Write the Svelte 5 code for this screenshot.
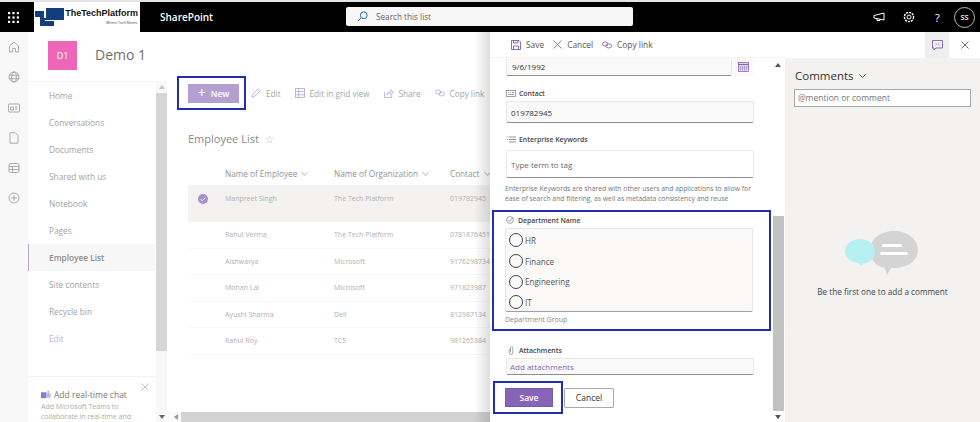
<script>
    const navItems = ['Home', 'Conversations', 'Documents', 'Shared with us', 'Notebook', 'Pages', 'Employee List', 'Site contents', 'Recycle bin', 'Edit'];

    const employees = [
        { name: 'Manpreet Singh', org: 'The Tech Platform', contact: '019782945', selected: true },
        { name: 'Rahul Verma', org: 'The Tech Platform', contact: '0781876451' },
        { name: 'Aishwarya', org: 'Microsoft', contact: '9176298734' },
        { name: 'Mohan Lal', org: 'Microsoft', contact: '971823987' },
        { name: 'Ayushi Sharma', org: 'Dell', contact: '812987134' },
        { name: 'Rahul Roy', org: 'TCS', contact: '981265384' }
    ];

    const departments = ['HR', 'Finance', 'Engineering', 'IT'];
</script>

<div class="screen">
    <!-- top suite bar -->
    <header class="suiteBar">
        <div class="waffle">
            <svg width="11" height="11" viewBox="0 0 11 11" fill="#fff">
                <rect x="0" y="0" width="2.2" height="2.2" /><rect x="4.4" y="0" width="2.2" height="2.2" /><rect x="8.8" y="0" width="2.2" height="2.2" />
                <rect x="0" y="4.4" width="2.2" height="2.2" /><rect x="4.4" y="4.4" width="2.2" height="2.2" /><rect x="8.8" y="4.4" width="2.2" height="2.2" />
                <rect x="0" y="8.8" width="2.2" height="2.2" /><rect x="4.4" y="8.8" width="2.2" height="2.2" /><rect x="8.8" y="8.8" width="2.2" height="2.2" />
            </svg>
        </div>
        <div class="logo">
            <svg width="29" height="18" viewBox="0 0 29 18">
                <rect x="0" y="3" width="9" height="6" fill="#123f7c" />
                <rect x="5" y="9" width="4" height="9" fill="#123f7c" />
                <rect x="9" y="10" width="10" height="8" fill="#123f7c" />
                <rect x="11" y="0" width="18" height="12" fill="#123f7c" />
                <path d="M10 12.5h9" stroke="#fff" stroke-width="1" />
            </svg>
            <div class="logoText">
                <span class="logoName">TheTechPlatform</span>
                <span class="logoTag">Where Tech Meets.</span>
            </div>
        </div>
        <div class="appName">SharePoint</div>
        <div class="search">
            <svg width="11" height="11" viewBox="0 0 11 11" fill="none" stroke="#2b6cb0" stroke-width="1">
                <circle cx="6.8" cy="4.2" r="3.4" /><path d="M4.4 6.6 0.8 10.2" />
            </svg>
            <span>Search this list</span>
        </div>
        <div class="suiteIcons">
            <svg width="12" height="10" viewBox="0 0 12 10" fill="none" stroke="#fff" stroke-width="1">
                <path d="M11 1 1 3.5v2.5l10 2z" /><path d="M4 6.5v2h3v-1.4" />
            </svg>
            <svg class="gear" width="12" height="12" viewBox="0 0 12 12" fill="none" stroke="#fff" stroke-width="1">
                <circle cx="6" cy="6" r="2" /><circle cx="6" cy="6" r="4.6" stroke-dasharray="2.2 0.8" stroke-width="1.4" />
            </svg>
            <span class="helpIcon">?</span>
            <span class="avatar">SS</span>
        </div>
    </header>

    <div class="workspace">
        <div class="page">
            <!-- left icon rail -->
            <aside class="rail">
                <svg width="12" height="12" viewBox="0 0 12 12"><path d="M1.5 11V5L6 1l4.500 4v6H7.500V7.500h-3V11z" /></svg>
                <svg width="12" height="12" viewBox="0 0 12 12"><circle cx="6" cy="6" r="5" /><ellipse cx="6" cy="6" rx="2.300" ry="5" /><path d="M1 4.300h10M1 7.700h10" /></svg>
                <svg width="12" height="12" viewBox="0 0 12 12"><rect x="0.500" y="2" width="11" height="8" rx="1" /><path d="M2.500 5h3v3h-3zM7 5h2.500M7 7h2.500" /></svg>
                <svg width="12" height="12" viewBox="0 0 12 12"><path d="M2 .8h5.300L10 3.500v7.700H2z" /></svg>
                <svg width="12" height="12" viewBox="0 0 12 12"><rect x="1" y="1.500" width="10" height="9" rx="1.500" /><path d="M1 4.500h10M1 7.500h10M4.500 4.500v6" /></svg>
                <svg width="12" height="12" viewBox="0 0 12 12"><circle cx="6" cy="6" r="5" /><path d="M6 3.200v5.600M3.200 6h5.600" /></svg>
            </aside>

            <div class="site">
                <div class="siteHeader">
                    <div class="siteLogo">D1</div>
                    <div class="siteName">Demo 1</div>
                </div>

                <div class="siteBody">
                    <nav class="nav">
                        <ul>
                            {#each navItems as item}
                                <li class:active={item === 'Employee List'} class:editLink={item === 'Edit'}>{item}</li>
                            {/each}
                        </ul>
                        <div class="promo">
                            <button class="promoClose" aria-label="Dismiss">
                                <svg width="8" height="8" viewBox="0 0 8 8" fill="none" stroke="#b9a6d6" stroke-width=".8"><path d="M.5.5l7 7M7.500.5l-7 7" /></svg>
                            </button>
                            <div class="promoTitle">
                                <svg width="10" height="10" viewBox="0 0 11 10"><rect x="0" y="2" width="6" height="6.500" fill="#7b83c4" /><rect x="6" y="3" width="4.500" height="5" rx="1" fill="#b5b9e0" /><circle cx="8" cy="1.500" r="1.300" fill="#b5b9e0" /></svg>
                                Add real-time chat
                            </div>
                            <p>Add Microsoft Teams to collaborate in real-time and</p>
                        </div>
                    </nav>

                    <div class="navScroll">
                        <svg width="6" height="4" viewBox="0 0 6 4" fill="#c4c4c4"><path d="M0 4 3 0l3 4z" /></svg>
                        <div class="navThumb"></div>
                        <svg class="navDown" width="6" height="4" viewBox="0 0 6 4" fill="#666"><path d="M0 0l3 4 3-4z" /></svg>
                    </div>

                    <main class="content">
                        <div class="commandBar">
                            <div class="hiliteNew">
                                <div class="newBtn"><span class="plus">+</span> New</div>
                            </div>
                            <span class="cmd">
                                <svg width="10" height="10" viewBox="0 0 11 11" fill="none" stroke="#b9a6d6" stroke-width=".9"><path d="M1 10l.8-3L8 .8 10.200 3 4 9.200z" /></svg>
                                Edit
                            </span>
                            <span class="cmd">
                                <svg width="10" height="10" viewBox="0 0 11 11" fill="none" stroke="#b9a6d6" stroke-width=".9"><rect x=".5" y=".5" width="10" height="10" /><path d="M.5 4h10M.5 7.500h10M4 .5v10" /></svg>
                                Edit in grid view
                            </span>
                            <span class="cmd">
                                <svg width="10" height="9" viewBox="0 0 11 10" fill="none" stroke="#b9a6d6" stroke-width=".9"><path d="M.5 3.500v6h8V7M3 6.500C3.500 4 5.500 3 7.500 3V1l3 2.800-3 2.700v-2C5.500 4.500 4 5 3 6.500z" /></svg>
                                Share
                            </span>
                            <span class="cmd">
                                <svg width="10" height="8" viewBox="0 0 11 8" fill="none" stroke="#b9a6d6" stroke-width=".9"><ellipse cx="3.500" cy="3" rx="3" ry="2.300" /><ellipse cx="7.500" cy="5" rx="3" ry="2.300" /></svg>
                                Copy link
                            </span>
                        </div>

                        <h2 class="listTitle">Employee List <span class="star">☆</span></h2>

                        <div class="listRow listHead">
                            <span></span>
                            <span>Name of Employee <i class="chev"></i></span>
                            <span>Name of Organization <i class="chev"></i></span>
                            <span>Contact <i class="chev"></i></span>
                        </div>

                        {#each employees as e}
                            <div class="listRow" class:selected={e.selected}>
                                <span class="checkCell">
                                    {#if e.selected}
                                        <svg width="10" height="10" viewBox="0 0 10 10"><circle cx="5" cy="5" r="5" fill="#a78fce" /><path d="M2.700 5.200 4.300 6.800 7.400 3.500" fill="none" stroke="#fff" stroke-width="1" /></svg>
                                    {/if}
                                </span>
                                <span>{e.name}</span>
                                <span>{e.org}</span>
                                <span>{e.contact}</span>
                            </div>
                        {/each}

                        <div class="hScroll">
                            <svg width="4" height="6" viewBox="0 0 4 6" fill="#999"><path d="M4 0 0 3l4 3z" /></svg>
                            <div class="hThumb"></div>
                        </div>
                    </main>
                </div>
            </div>
            <div class="panelShadow"></div>
        </div>

        <!-- edit form panel -->
        <section class="panel">
            <div class="panelBar">
                <span class="pCmd">
                    <svg width="10" height="10" viewBox="0 0 10 10" fill="none" stroke="#7a5fb0" stroke-width=".9"><path d="M.5.5h7.500l1.500 1.500v7.500H.5z" /><path d="M2.500.5v2.500h4.500V.5M2.500 9.500V6h5v3.500" /></svg>
                    Save
                </span>
                <span class="pCmd">
                    <svg width="9" height="9" viewBox="0 0 9 9" fill="none" stroke="#7a5fb0" stroke-width=".8"><path d="M.5.5l8 8M8.500.5l-8 8" /></svg>
                    Cancel
                </span>
                <span class="pCmd">
                    <svg width="10" height="8" viewBox="0 0 11 8" fill="none" stroke="#7a5fb0" stroke-width=".9"><ellipse cx="3.500" cy="3" rx="3" ry="2.300" /><ellipse cx="7.500" cy="5" rx="3" ry="2.300" /></svg>
                    Copy link
                </span>
            </div>
            <div class="panelBody">
                <div class="form">
                    <div class="dateRow">
                        <div class="input dateInput">9/6/1992</div>
                        <div class="calBtn">
                            <svg width="11" height="10" viewBox="0 0 11 10" fill="none" stroke="#8764b8" stroke-width=".8"><rect x=".5" y=".5" width="10" height="9" /><path d="M.5 2.500h10" stroke-width="1.500" /><path d="M2.500 4v5M4.500 4v5M6.500 4v5M8.500 4v5M.5 5h10M.5 7h10" stroke-width=".5" /></svg>
                        </div>
                    </div>

                    <div class="fieldLabel contactLabel">
                        <svg width="10" height="7" viewBox="0 0 10 7" fill="none" stroke="#777" stroke-width=".7"><rect x=".4" y=".4" width="9" height="6" /><path d="M2 2.500h1M4 2.500h1M6 2.500h2M2 4.500h6" /></svg>
                        Contact
                    </div>
                    <div class="input contactInput">019782945</div>

                    <div class="fieldLabel keywordsLabel">
                        <svg width="10" height="7" viewBox="0 0 10 7" fill="none" stroke="#777" stroke-width=".8"><path d="M3 1h7M3 3.500h7M3 6h7M.5 1h1M1 3.500h1" /></svg>
                        Enterprise Keywords
                    </div>
                    <div class="input keywordsInput">Type term to tag</div>
                    <p class="helpText">Enterprise Keywords are shared with other users and applications to allow for ease of search and filtering, as well as metadata consistency and reuse</p>

                    <div class="hiliteDept">
                        <div class="fieldLabel deptLabel">
                            <svg width="8" height="8" viewBox="0 0 8 8" fill="none" stroke="#777" stroke-width=".7"><circle cx="4" cy="4" r="3.400" /><path d="M2.300 4 3.600 5.300 6.800 1.500" /></svg>
                            Department Name
                        </div>
                        <div class="choices">
                            {#each departments as d}
                                <div class="choice"><span class="radio"></span>{d}</div>
                            {/each}
                        </div>
                        <div class="deptHint">Department Group</div>
                    </div>

                    <div class="fieldLabel attachLabel">
                        <svg width="10" height="9" viewBox="0 0 6 10" fill="none" stroke="#888" stroke-width=".8"><path d="M1 3v4.500a2 2 0 0 0 4 0V2a1.300 1.300 0 0 0-2.600 0v5" /></svg>
                        Attachments
                    </div>
                    <div class="input attachInput">Add attachments</div>

                    <div class="formButtons">
                        <div class="hiliteSave">
                            <button class="saveBtn">Save</button>
                        </div>
                        <button class="cancelBtn">Cancel</button>
                    </div>
                </div>
                <div class="formScroll">
                    <svg width="6" height="4" viewBox="0 0 6 4" fill="#555"><path d="M0 4 3 0l3 4z" /></svg>
                    <div class="formThumb"></div>
                    <svg width="6" height="4" viewBox="0 0 6 4" fill="#555"><path d="M0 0l3 4 3-4z" /></svg>
                </div>
            </div>
        </section>

        <!-- comments pane -->
        <aside class="comments">
            <div class="commentsBar">
                <div class="commentToggle">
                    <svg width="11" height="11" viewBox="0 0 11 11" fill="none" stroke="#7a5fb0" stroke-width=".9"><path d="M.5.5h10v7.500H4l-2 2V8H.5z" /><path d="M3.800 4.200h.8M6.400 4.200h.8" stroke-width="1.200" /></svg>
                </div>
                <svg width="8" height="8" viewBox="0 0 8 8" fill="none" stroke="#444" stroke-width=".8"><path d="M.5.5l7 7M7.500.5l-7 7" /></svg>
            </div>
            <div class="commentsBody">
                <div class="commentsTitle">
                    Comments
                    <svg width="7" height="4" viewBox="0 0 7 4" fill="none" stroke="#333" stroke-width=".8"><path d="M.3.300 3.500 3.500 6.700.3" /></svg>
                </div>
                <div class="commentInput">@mention or comment</div>
                <div class="emptyState">
                    <svg width="76" height="46" viewBox="0 0 76 46">
                        <path d="M50 1c13 0 24 8 24 19s-11 18-24 18c-1 0-2 0-3 0l-4 7-2-7C31 36 26 29 26 20 26 9 37 1 50 1z" fill="#d4d4d4" />
                        <rect x="38" y="14" width="20" height="3" rx="1.500" fill="#fff" />
                        <rect x="36" y="22" width="28" height="3" rx="1.500" fill="#fff" />
                        <path d="M16 9c8.500 0 15 5 15 12.500S24.500 33 21 33l-1.500 0-2 3-3-3C7 33 1 28 1 21.500 1 14 7.500 9 16 9z" fill="#b6f0f1" />
                    </svg>
                    <p>Be the first one to add a comment</p>
                </div>
            </div>
        </aside>
    </div>
</div>

<style>
    :global(body) {
        margin: 0;
        font-family: "Open Sans", "Noto Sans", sans-serif;
    }

    .screen {
        width: 980px;
        height: 422px;
        overflow: hidden;
        display: flex;
        flex-direction: column;
        background: #e4e4e4;
    }

    button {
        font-family: inherit;
        cursor: pointer;
    }

    /* suite bar */
    .suiteBar {
        flex: 0 0 30px;
        margin-top: 2px;
        background: #000;
        display: flex;
        align-items: center;
        color: #fff;
    }
    .suiteBar > * {
        flex: none;
    }
    .waffle {
        width: 34px;
        padding-left: 8px;
        box-sizing: border-box;
        display: flex;
    }
    .logo {
        width: 106px;
        height: 30px;
        background: #fff;
        display: flex;
        align-items: flex-start;
        padding: 6px 0 0 1px;
        box-sizing: border-box;
        gap: 3px;
    }
    .logoText {
        width: 71px;
        display: flex;
        flex-direction: column;
        align-items: flex-end;
        color: #111;
        line-height: 1;
    }
    .logoName {
        font-family: "Liberation Sans", sans-serif;
        font-weight: 700;
        font-size: 9px;
        margin-top: 1px;
        white-space: nowrap;
    }
    .logoTag {
        font-size: 3.6px;
        margin-top: 3px;
        color: #444;
        white-space: nowrap;
    }
    .appName {
        width: 206px;
        padding-left: 20px;
        box-sizing: border-box;
        font-size: 10px;
        font-weight: 600;
    }
    .search {
        width: 287px;
        height: 19px;
        margin-top: -1px;
        background: #f7f7f7;
        border-radius: 2px;
        display: flex;
        align-items: center;
        gap: 8px;
        padding-left: 11px;
        box-sizing: border-box;
        color: #666;
        font-size: 8.2px;
    }
    .suiteIcons {
        margin-left: auto;
        padding-right: 5px;
        display: flex;
        align-items: center;
    }
    .gear {
        margin-left: 18px;
    }
    .helpIcon {
        margin-left: 20px;
        font-size: 11px;
        width: 8px;
    }
    .avatar {
        margin-left: 11px;
        width: 19px;
        height: 19px;
        border: 1px solid #bbb;
        border-radius: 50%;
        display: flex;
        align-items: center;
        justify-content: center;
        font-size: 7.5px;
        font-weight: 600;
    }

    .workspace {
        flex: 1;
        min-height: 0;
        display: flex;
    }

    /* dimmed SharePoint page */
    .page {
        width: 490px;
        position: relative;
        display: flex;
        overflow: hidden;
        background: #fff;
    }
    .panelShadow {
        position: absolute;
        top: 0;
        right: 0;
        bottom: 0;
        width: 16px;
        background: linear-gradient(to right, rgba(0, 0, 0, 0), rgba(0, 0, 0, 0.13));
    }

    .rail {
        width: 28px;
        flex: none;
        background: #f8f8f8;
        display: flex;
        flex-direction: column;
        align-items: center;
        gap: 18.3px;
        padding: 9px 0 0 0;
        box-sizing: border-box;
    }
    .rail svg {
        fill: none;
        stroke: #a3a3a3;
        stroke-width: 0.9;
        margin-left: -1px;
    }

    .site {
        flex: 1;
        min-width: 0;
        display: flex;
        flex-direction: column;
    }
    .siteHeader {
        flex: 0 0 44px;
        display: flex;
        align-items: flex-start;
    }
    .siteLogo {
        width: 29px;
        height: 29px;
        margin: 9px 0 0 20px;
        background: #ee66b8;
        color: #fff;
        font-size: 9px;
        display: flex;
        align-items: center;
        justify-content: center;
    }
    .siteName {
        margin: 13px 0 0 18px;
        font-size: 14px;
        line-height: 20px;
        color: #6f6f6f;
    }

    .siteBody {
        flex: 1;
        min-height: 0;
        display: flex;
    }

    .nav {
        width: 128px;
        flex: none;
        margin-top: 5px;
        border-top: 1px solid #f5f5f5;
        display: flex;
        flex-direction: column;
    }
    .nav ul {
        list-style: none;
        margin: 0;
        padding: 0;
    }
    .nav li {
        height: 27px;
        line-height: 27px;
        padding-left: 21px;
        font-size: 8.3px;
        color: #a2a2a2;
    }
    .nav li.active {
        background: #f7f7f7;
        border-left: 1px solid #b9a6d6;
        padding-left: 20px;
        font-weight: 600;
        color: #8a8a8a;
        margin-right: 1px;
    }
    .nav li.editLink {
        color: #c2b3dc;
    }
    .promo {
        margin-top: auto;
        position: relative;
        height: 46px;
        border-top: 1px solid #f3f3f3;
        padding: 12px 8px 0 13px;
        box-sizing: border-box;
    }
    .promoClose {
        position: absolute;
        top: 6px;
        right: 7px;
        padding: 0;
        border: 0;
        background: none;
        display: flex;
    }
    .promoTitle {
        display: flex;
        align-items: center;
        gap: 3px;
        font-size: 8.5px;
        font-weight: 500;
        line-height: 12px;
        color: #777;
    }
    .promo p {
        margin: 1px 0 0;
        font-size: 7px;
        line-height: 10px;
        color: #ababab;
    }

    .navScroll {
        width: 11px;
        flex: none;
        margin-top: 5px;
        background: #f8f8f8;
        display: flex;
        flex-direction: column;
        align-items: center;
        padding-top: 4px;
        box-sizing: border-box;
    }
    .navThumb {
        width: 11px;
        height: 258px;
        margin-top: 4px;
        background: #d6d6d6;
    }
    .navDown {
        margin-top: auto;
        margin-bottom: 3px;
    }

    .content {
        flex: 1;
        min-width: 0;
        margin-left: 1px;
        display: flex;
        flex-direction: column;
    }
    .commandBar {
        flex: 0 0 34px;
        display: flex;
        align-items: center;
        padding-left: 9px;
        white-space: nowrap;
    }
    .hiliteNew {
        width: 69px;
        height: 34px;
        box-sizing: border-box;
        border: 2px solid #1f2fb0;
        display: flex;
        align-items: center;
        padding-left: 9px;
        flex: none;
    }
    .newBtn {
        width: 51px;
        height: 19px;
        background: #b4a0d0;
        color: #fff;
        font-size: 8.5px;
        font-weight: 600;
        display: flex;
        align-items: center;
        justify-content: center;
        gap: 5px;
    }
    .plus {
        font-size: 14px;
        font-weight: 400;
        line-height: 14px;
    }
    .cmd {
        display: inline-flex;
        align-items: center;
        gap: 5px;
        font-size: 8.2px;
        color: #a6a6a6;
        margin-left: 14px;
        flex: none;
    }
    .cmd:nth-child(2) {
        margin-left: 5px;
    }

    .listTitle {
        margin: 20px 0 0 20px;
        font-size: 11px;
        font-weight: 400;
        line-height: 18px;
        color: #8a8a8a;
    }
    .star {
        font-size: 10px;
        margin-left: 3px;
        color: #aaa;
    }

    .listRow {
        margin-left: 20px;
        height: 26.5px;
        box-sizing: border-box;
        display: grid;
        grid-template-columns: 37px 109px 116px 40px;
        align-items: center;
        font-size: 7px;
        color: #b0b0b0;
        white-space: nowrap;
        border-bottom: 1px solid #f7f7f7;
    }
    .listRow.listHead {
        margin-top: 13px;
        height: 24px;
        font-size: 8.2px;
        color: #929292;
        border-bottom: 0;
    }
    .listRow.selected {
        height: 37px;
        background: #f3f2f1;
        align-items: start;
        padding-top: 9px;
        border-bottom: 0;
    }
    .checkCell {
        display: flex;
        padding-left: 10px;
    }
    .chev {
        display: inline-block;
        width: 4px;
        height: 4px;
        margin: 0 0 2px 3px;
        border-right: 1px solid #c6c6c6;
        border-bottom: 1px solid #c6c6c6;
        transform: rotate(45deg);
    }

    .hScroll {
        margin-top: auto;
        height: 10px;
        display: flex;
        align-items: center;
        padding-left: 6px;
        background: #fafafa;
    }
    .hThumb {
        flex: 1;
        height: 10px;
        margin-left: 3px;
        background: #d2d2d2;
    }

    /* form panel */
    .panel {
        width: 295px;
        flex: none;
        display: flex;
        flex-direction: column;
        background: #fff;
    }
    .panelBar {
        flex: 0 0 26px;
        display: flex;
        align-items: center;
        padding-left: 21px;
        border-bottom: 1px solid #f4f4f4;
        box-sizing: border-box;
    }
    .pCmd {
        display: inline-flex;
        align-items: center;
        gap: 5px;
        font-size: 8.4px;
        color: #555;
        margin-right: 9px;
    }
    .panelBody {
        flex: 1;
        min-height: 0;
        display: flex;
    }
    .form {
        width: 282px;
        flex: none;
        padding-left: 2px;
        box-sizing: border-box;
    }
    .input {
        margin-left: 14px;
        width: 248px;
        box-sizing: border-box;
        background: #faf9f8;
        border: 1px solid #e8e8e8;
        border-bottom: 1px solid #8f8f8f;
        border-radius: 2px;
        font-size: 8px;
        color: #333;
        padding-left: 4px;
        display: flex;
        align-items: center;
    }
    .dateRow {
        height: 18px;
        display: flex;
    }
    .dateInput {
        width: 226px;
        border-top: 0;
        padding-left: 5px;
    }
    .calBtn {
        width: 20px;
        margin-left: 1px;
        background: #faf9f8;
        display: flex;
        align-items: center;
        justify-content: center;
    }
    .fieldLabel {
        margin-left: 14px;
        height: 14px;
        display: flex;
        align-items: center;
        gap: 3px;
        font-size: 6.9px;
        font-weight: 600;
        color: #444;
    }
    .contactLabel {
        margin-top: 10px;
    }
    .contactInput {
        height: 22px;
        margin-top: 1px;
    }
    .keywordsLabel {
        margin-top: 9px;
    }
    .keywordsInput {
        height: 28px;
        margin-top: 4px;
        background: #fff;
        color: #666;
    }
    .helpText {
        margin: 6px 0 0 13px;
        width: 250px;
        font-size: 6.8px;
        line-height: 10px;
        color: #777;
    }
    .hiliteDept {
        margin-top: 6px;
        width: 279px;
        height: 121px;
        box-sizing: border-box;
        border: 2px solid #1f2fb0;
        padding-top: 1px;
    }
    .deptLabel {
        margin-left: 12px;
        gap: 4px;
    }
    .choices {
        margin: 1px 0 0 11px;
        width: 248px;
        height: 84px;
        box-sizing: border-box;
        background: #faf9f8;
        border: 1px solid #e6e6e6;
        border-bottom: 1px solid #a0a0a0;
        border-radius: 2px;
        padding-top: 1px;
        overflow: hidden;
    }
    .choice {
        height: 20.7px;
        display: flex;
        align-items: center;
        gap: 2px;
        padding-left: 3px;
        font-size: 8.1px;
        color: #555;
    }
    .radio {
        width: 12px;
        height: 12px;
        border: 1px solid #444;
        border-radius: 50%;
    }
    .deptHint {
        margin: 3px 0 0 11px;
        font-size: 7px;
        line-height: 10px;
        color: #888;
    }
    .attachLabel {
        margin-top: 12px;
    }
    .attachInput {
        height: 17px;
        margin-top: 1px;
        color: #8764b8;
        padding-left: 3px;
    }
    .formButtons {
        margin-top: 6px;
        display: flex;
        align-items: center;
    }
    .hiliteSave {
        margin-left: 1px;
        width: 70px;
        height: 33px;
        box-sizing: border-box;
        border: 2px solid #1f2fb0;
        display: flex;
        align-items: center;
        padding-left: 10px;
    }
    .saveBtn {
        width: 48px;
        height: 19px;
        padding: 0;
        background: #8764b8;
        border: 1px solid #7a58ad;
        color: #fff;
        font-size: 8.5px;
        font-weight: 600;
    }
    .cancelBtn {
        margin-left: 1px;
        width: 50px;
        height: 20px;
        padding: 0;
        background: #fff;
        border: 1px solid #aaa;
        border-radius: 1px;
        color: #333;
        font-size: 8.5px;
        font-weight: 500;
    }
    .formScroll {
        width: 12px;
        flex: none;
        display: flex;
        flex-direction: column;
        align-items: center;
        padding: 5px 0 3px;
        box-sizing: border-box;
    }
    .formThumb {
        width: 11px;
        height: 195px;
        margin-top: 149px;
        margin-bottom: auto;
        background: #c2c2c2;
    }

    /* comments */
    .comments {
        flex: 1;
        display: flex;
        flex-direction: column;
        background: #f3f2f1;
    }
    .commentsBar {
        flex: 0 0 26px;
        background: #fff;
        display: flex;
        align-items: center;
        padding-left: 140px;
    }
    .commentToggle {
        width: 24px;
        height: 26px;
        background: #efefef;
        display: flex;
        align-items: center;
        justify-content: center;
        margin-right: 12px;
    }
    .commentsBody {
        padding: 9px 9px 0;
    }
    .commentsTitle {
        padding-left: 1px;
        display: flex;
        align-items: center;
        gap: 5px;
        font-size: 11.5px;
        line-height: 18px;
        color: #333;
    }
    .commentInput {
        margin-top: 4px;
        height: 18px;
        box-sizing: border-box;
        background: #fff;
        border: 1px solid #a8a8a8;
        font-size: 8.5px;
        line-height: 16px;
        padding-left: 3px;
        color: #777;
    }
    .emptyState {
        margin-top: 123px;
        display: flex;
        flex-direction: column;
        align-items: center;
    }
    .emptyState svg {
        margin-left: -1px;
    }
    .emptyState p {
        margin: 10px 0 0;
        font-size: 8.2px;
        line-height: 12px;
        color: #444;
        white-space: nowrap;
    }
</style>
